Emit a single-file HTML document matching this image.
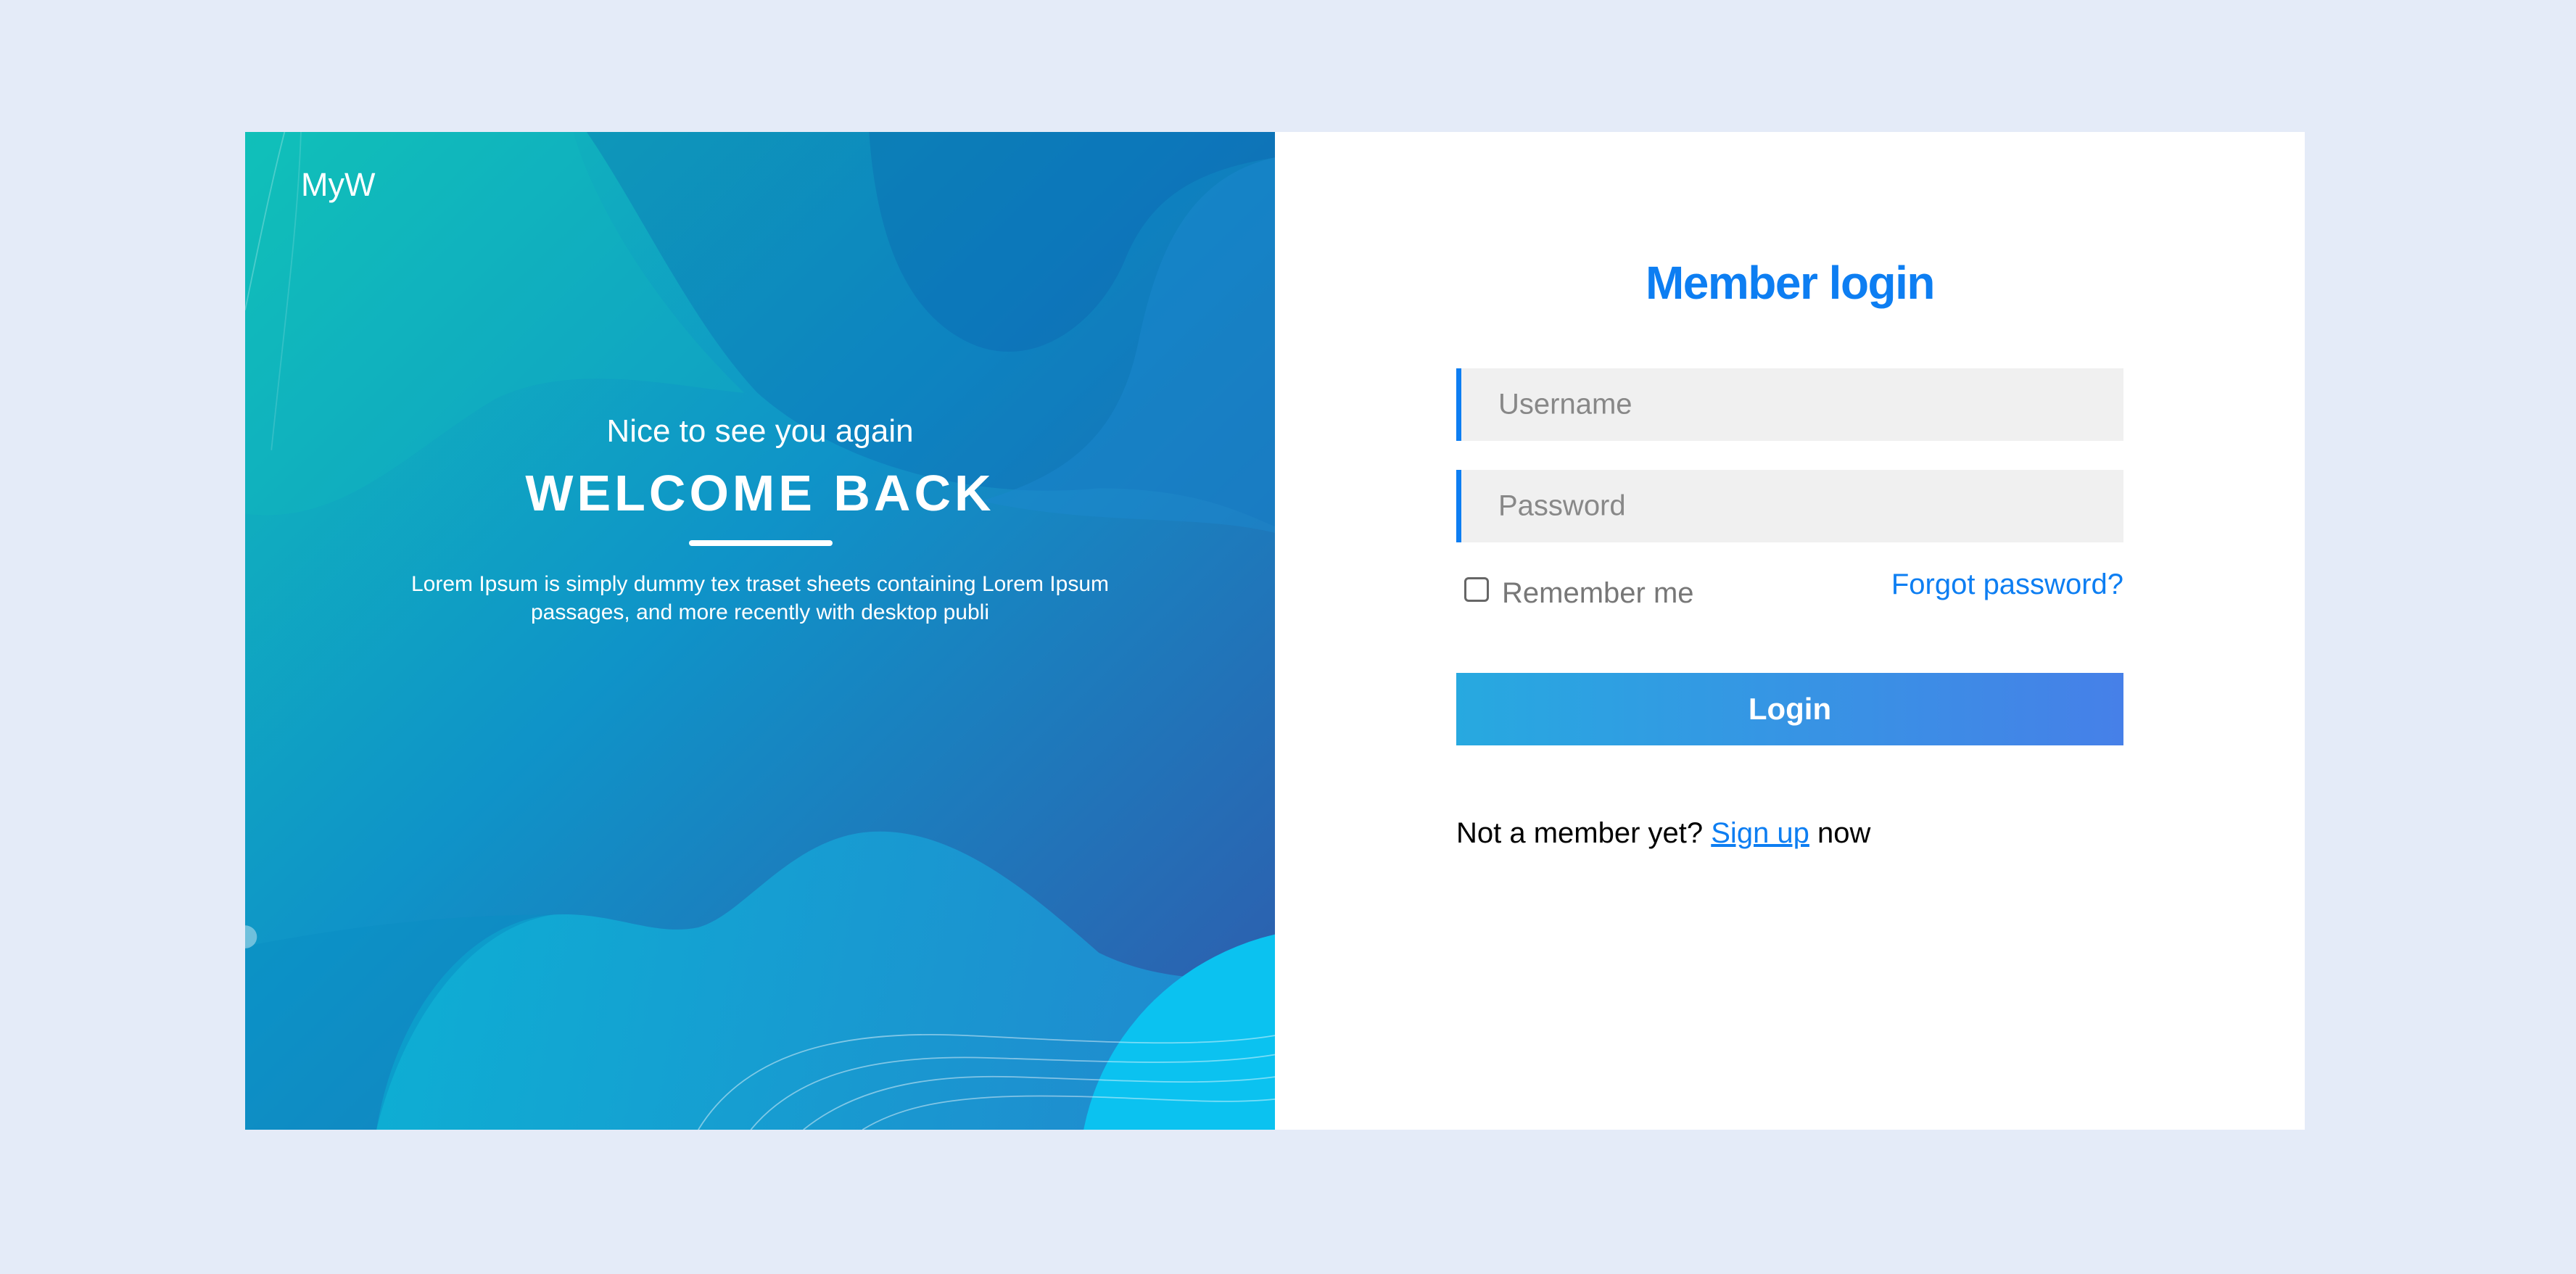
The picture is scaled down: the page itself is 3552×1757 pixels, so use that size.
<!DOCTYPE html>
<html><head><meta charset="utf-8"><style>
*{margin:0;padding:0;box-sizing:border-box}
html,body{width:3552px;height:1757px;background:#e4ebf8;overflow:hidden;font-family:"Liberation Sans",Arial,sans-serif}
.card{position:absolute;left:338px;top:182px;width:2840px;height:1376px;background:#fff;overflow:hidden}
.left{position:absolute;left:0;top:0;width:1420px;height:1376px;overflow:hidden}
.left svg{position:absolute;left:0;top:0;display:block}
.t{position:absolute;color:#fff;white-space:nowrap}
.abs{position:absolute;white-space:nowrap}
.inp{position:absolute;left:1670px;width:920px;height:100px;background:#f0f0f0;border-left:7px solid #0d7ef2}
.inp span{position:absolute;left:51px;top:50%;transform:translateY(-50%);font-size:40px;color:#888}
</style></head><body>
<div class="card">
<div class="left">
<svg width="1420" height="1376" viewBox="0 0 1568 1568" preserveAspectRatio="none">
<defs>
<linearGradient id="bg" x1="0" y1="0" x2="1" y2="1">
<stop offset="0" stop-color="#10c0b8"/><stop offset="0.45" stop-color="#0f93c8"/><stop offset="1" stop-color="#3158ab"/>
</linearGradient>
<linearGradient id="bl" x1="0" y1="0" x2="1" y2="0">
<stop offset="0" stop-color="#0db4d6"/><stop offset="1" stop-color="#1f8fd4"/>
</linearGradient>
</defs>
<rect width="1568" height="1568" fill="url(#bg)"/>
<path d="M520 0 C600 120 680 300 780 410 C900 520 1100 580 1300 560 C1450 560 1520 600 1568 620 L1568 0 Z" fill="#0b5fae" opacity="0.3"/>
<path d="M950 0 C960 150 1000 280 1100 330 C1200 380 1300 300 1340 200 C1380 100 1450 60 1568 40 L1568 0 Z" fill="#0a55a8" opacity="0.25"/>
<path d="M1568 40 C1440 70 1390 180 1360 330 C1330 480 1250 540 1120 580 C1300 620 1450 600 1568 630 Z" fill="#1c8ad0" opacity="0.45"/>
<path d="M0 600 C150 620 250 500 380 420 C500 360 650 400 760 410 C600 250 520 80 500 0 L0 0 Z" fill="#15c4c0" opacity="0.2"/>
<path d="M200 1568 C230 1380 340 1240 470 1230 C560 1225 620 1265 690 1250 C760 1230 830 1110 950 1100 C1080 1090 1200 1200 1300 1290 C1400 1340 1500 1330 1568 1330 L1568 1568 Z" fill="url(#bl)" opacity="0.85"/>
<path d="M0 1280 C150 1250 300 1230 470 1230 C340 1250 240 1400 200 1568 L0 1568 Z" fill="#0a8ec4" opacity="0.5"/>
<circle cx="1660" cy="1640" r="390" fill="#0bc2f0"/>
<g fill="none" stroke="#ffffff" stroke-opacity="0.45" stroke-width="2">
<path d="M690 1568 C760 1450 900 1410 1100 1420 C1300 1430 1450 1440 1568 1420"/>
<path d="M770 1568 C840 1480 960 1450 1130 1455 C1300 1460 1450 1470 1568 1450"/>
<path d="M850 1568 C920 1510 1020 1480 1170 1485 C1330 1490 1460 1500 1568 1485"/>
<path d="M940 1568 C1000 1530 1080 1515 1210 1515 C1360 1515 1470 1530 1568 1520"/>
<path d="M0 280 C20 180 40 80 60 0" stroke-opacity="0.25"/><path d="M40 500 C60 300 80 150 85 0" stroke-opacity="0.15"/>
</g>
<circle cx="0" cy="1265" r="18" fill="#fff" opacity="0.4"/>
</svg>
<div class="t" style="left:77px;top:45px;font-size:45px;line-height:55px">MyW</div>
<div class="t" style="left:0;width:1420px;text-align:center;top:388px;font-size:44px;line-height:50px">Nice to see you again</div>
<div class="t" style="left:0;width:1420px;text-align:center;top:458px;font-size:70px;line-height:80px;font-weight:bold;letter-spacing:5px">WELCOME BACK</div>
<div style="position:absolute;left:612px;top:563px;width:198px;height:8px;border-radius:4px;background:#fff"></div>
<div class="t" style="left:0;width:1420px;text-align:center;top:604px;font-size:30px;line-height:39px">Lorem Ipsum is simply dummy tex traset sheets containing Lorem Ipsum<br>passages, and more recently with desktop publi</div>
</div>
<div class="abs" style="left:1420px;width:1420px;text-align:center;top:168px;font-size:64px;line-height:80px;font-weight:bold;color:#0d7ef2;letter-spacing:-1.5px">Member login</div>
<div class="inp" style="top:326px"><span>Username</span></div>
<div class="inp" style="top:466px"><span>Password</span></div>
<div style="position:absolute;left:1681px;top:614px;width:34px;height:34px;border:3px solid #666;border-radius:6px;background:#fff"></div>
<div class="abs" style="left:1733px;top:611px;font-size:40px;line-height:50px;color:#777">Remember me</div>
<div class="abs" style="right:250px;top:599px;font-size:40px;line-height:50px;color:#0d7ef2">Forgot password?</div>
<div style="position:absolute;left:1670px;top:746px;width:920px;height:100px;background:linear-gradient(90deg,#27a9e0,#4680e8);color:#fff;font-size:42px;font-weight:bold;text-align:center;line-height:100px">Login</div>
<div class="abs" style="left:1670px;top:942px;font-size:40px;line-height:50px;color:#000">Not a member yet? <span style="color:#0d7ef2;text-decoration:underline">Sign up</span> now</div>
</div>
</body></html>
